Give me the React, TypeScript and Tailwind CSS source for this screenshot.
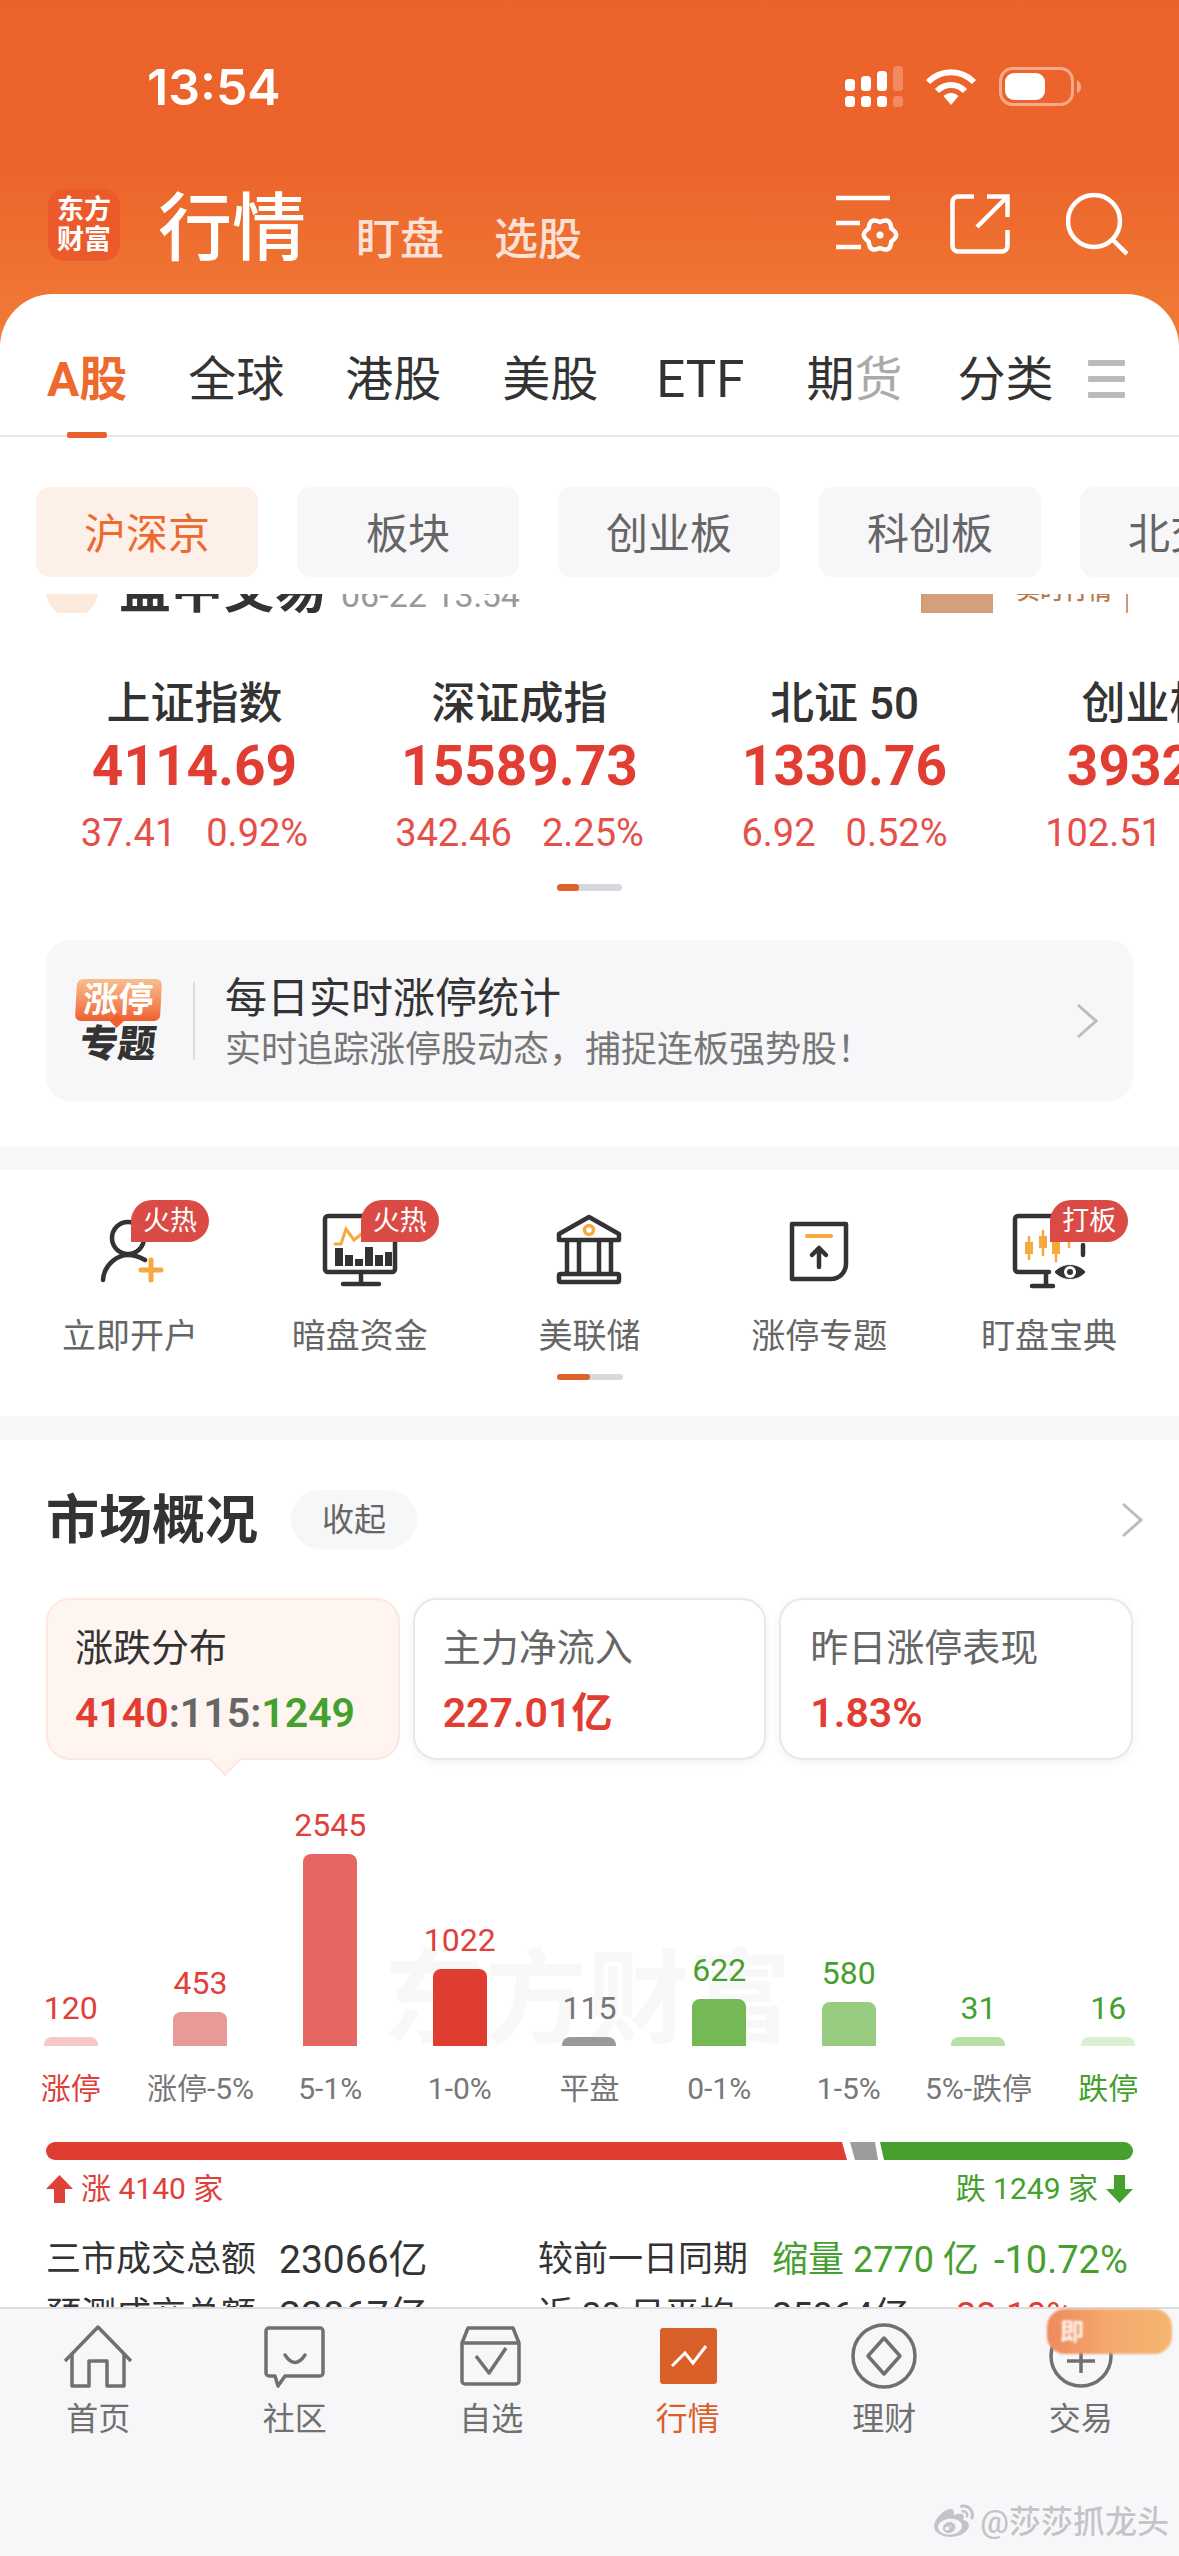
import { FaWeibo } from 'react-icons/fa';

const tabs = ['全球', '港股', '美股'];
const subTabs = ['板块', '创业板', '科创板', '北交所'];

const indices = [
  { name: '上证指数', value: '4114.69', change: '37.41', pct: '0.92%' },
  { name: '深证成指', value: '15589.73', change: '342.46', pct: '2.25%' },
  { name: '北证 50', value: '1330.76', change: '6.92', pct: '0.52%' },
  { name: '创业板指', value: '3932.16', change: '102.51', pct: '2.68%' },
];

const bars = [
  { value: '120', label: '涨停', h: 'h-[9px]', bar: 'bg-[#F6C8C6]', text: 'text-[#E0403A]', labelText: 'text-[#E0403A]' },
  { value: '453', label: '涨停-5%', h: 'h-[34px]', bar: 'bg-[#EA9A96]', text: 'text-[#E0403A]', labelText: 'text-[#777777]' },
  { value: '2545', label: '5-1%', h: 'h-[192px]', bar: 'bg-[#E66661]', text: 'text-[#E0403A]', labelText: 'text-[#777777]' },
  { value: '1022', label: '1-0%', h: 'h-[77px]', bar: 'bg-[#DF3D32]', text: 'text-[#E0403A]', labelText: 'text-[#777777]' },
  { value: '115', label: '平盘', h: 'h-[9px]', bar: 'bg-[#999999]', text: 'text-[#777777]', labelText: 'text-[#777777]' },
  { value: '622', label: '0-1%', h: 'h-[47px]', bar: 'bg-[#75B957]', text: 'text-[#45A02E]', labelText: 'text-[#777777]' },
  { value: '580', label: '1-5%', h: 'h-[44px]', bar: 'bg-[#98CC80]', text: 'text-[#45A02E]', labelText: 'text-[#777777]' },
  { value: '31', label: '5%-跌停', h: 'h-[9px]', bar: 'bg-[#B9DFA9]', text: 'text-[#45A02E]', labelText: 'text-[#777777]' },
  { value: '16', label: '跌停', h: 'h-[9px]', bar: 'bg-[#D9EFD0]', text: 'text-[#45A02E]', labelText: 'text-[#45A02E]' },
];

function SignalIcon() {
  return (
    <svg width="58" height="42" viewBox="0 0 58 42" fill="#fff">
      <rect x="0" y="30" width="10" height="11" rx="3.5" />
      <rect x="16" y="30" width="10" height="11" rx="3.5" />
      <rect x="32" y="30" width="10" height="11" rx="3.5" />
      <rect x="48" y="30" width="10" height="11" rx="3.5" opacity="0.25" />
      <rect x="0" y="13" width="10" height="12" rx="3.5" />
      <rect x="16" y="10" width="10" height="15" rx="3.5" />
      <rect x="32" y="5" width="10" height="20" rx="3.5" />
      <rect x="48" y="0" width="10" height="25" rx="3.5" opacity="0.25" />
    </svg>
  );
}

function WifiIcon() {
  return (
    <svg width="52" height="38" viewBox="0 0 52 38" fill="none" stroke="#fff" strokeWidth="6">
      <path d="M3 14 C16 1 36 1 49 14" />
      <path d="M12 23 C20 15 32 15 40 23" />
      <path d="M18.5 28 C23 24 29 24 33.5 28 L26 37 Z" fill="#fff" stroke="none" />
    </svg>
  );
}

function BatteryIcon() {
  return (
    <svg width="84" height="40" viewBox="0 0 84 40">
      <rect x="1.5" y="1.5" width="72" height="36" rx="12" fill="none" stroke="#fff" strokeOpacity="0.45" strokeWidth="3" />
      <rect x="6" y="6" width="40" height="27" rx="9" fill="#fff" />
      <path d="M78 13 C81 15 82 17 82 20 C82 23 81 25 78 26 Z" fill="#fff" fillOpacity="0.45" />
    </svg>
  );
}

function GearMenuIcon() {
  return (
    <svg width="64" height="60" viewBox="0 0 64 60" fill="none" stroke="#fff" strokeWidth="4.5">
      <path d="M0 4 H54 M0 29 H24 M0 53 H25" />
      <path d="M55.3 34.5 Q65 41 55.3 47.5 Q54.5 59.2 44 54 Q33.5 59.2 32.7 47.5 Q23 41 32.7 34.5 Q33.5 22.8 44 28 Q54.5 22.8 55.3 34.5 Z" strokeLinejoin="round" />
      <circle cx="44" cy="41" r="3.5" fill="#fff" stroke="none" />
    </svg>
  );
}

function ShareIcon() {
  return (
    <svg width="60" height="60" viewBox="0 0 60 60" fill="none" stroke="#fff" strokeWidth="4.5">
      <path d="M24 2.5 H8 a5.5 5.5 0 0 0 -5.5 5.5 V52 a5.5 5.5 0 0 0 5.5 5.5 H52 a5.5 5.5 0 0 0 5.5 -5.5 V36" />
      <path d="M37 2.5 H57.5 V23" />
      <path d="M57.5 2.5 L27 33" />
    </svg>
  );
}

function SearchIcon() {
  return (
    <svg width="62" height="64" viewBox="0 0 62 64" fill="none" stroke="#fff" strokeWidth="4.5">
      <circle cx="28" cy="29" r="26" />
      <path d="M47 48 L61 62" />
    </svg>
  );
}

function Chevron() {
  return (
    <svg width="22" height="36" viewBox="0 0 22 36" fill="none" stroke="#BDBDBD" strokeWidth="3">
      <path d="M2 2 L20 18 L2 34" />
    </svg>
  );
}

function OpenAccountIcon() {
  return (
    <svg width="100" height="100" viewBox="0 0 100 100" fill="none" stroke="#333" strokeWidth="4.5" strokeLinecap="round">
      <circle cx="48" cy="37" r="16" />
      <path d="M23 79 C24 63 38 54 48 54 C55 54 60 56 65 59" />
      <path d="M71 59 V79 M61 69 H81" stroke="#F5A93F" strokeWidth="5" />
    </svg>
  );
}

function DarkPoolIcon() {
  return (
    <svg width="100" height="100" viewBox="0 0 100 100" fill="none" stroke="#333" strokeWidth="4.5" strokeLinecap="round">
      <defs>
        <pattern id="stripes" width="4" height="4" patternUnits="userSpaceOnUse">
          <rect width="4" height="2.6" fill="#F5B04C" />
        </pattern>
      </defs>
      <rect x="15" y="15" width="70" height="56" rx="3" />
      <path d="M51 71 V83 M33 83 H69" />
      <path d="M25 43 H31 L36 28 L44 39 L54 31" stroke="#F5A93F" strokeWidth="3" />
      <g fill="url(#stripes)" stroke="none">
        <rect x="25" y="47" width="8" height="18" />
        <rect x="35" y="54" width="8" height="11" />
        <rect x="45" y="58" width="8" height="7" />
        <rect x="55" y="46" width="8" height="19" />
        <rect x="65" y="54" width="8" height="11" />
        <rect x="75" y="51" width="7" height="14" />
      </g>
    </svg>
  );
}

function FedIcon() {
  return (
    <svg width="100" height="100" viewBox="0 0 100 100" fill="none" stroke="#333" strokeWidth="4.5" strokeLinejoin="round">
      <path d="M20 39 V33 L50 16 L80 33 V39 Z" />
      <circle cx="50" cy="29" r="4.5" stroke="#F5A93F" strokeWidth="3.5" />
      <path d="M28 39 V73 M40 39 V73 M60 39 V73 M72 39 V73" />
      <rect x="20" y="73" width="60" height="8" rx="1.5" />
    </svg>
  );
}

function LimitUpIcon() {
  return (
    <svg width="100" height="100" viewBox="0 0 100 100" fill="none" stroke="#333" strokeWidth="4.5" strokeLinecap="round" strokeLinejoin="round">
      <path d="M23 23 H77 V63 a15 15 0 0 1 -15 15 H23 Z" />
      <path d="M38 35 H62" stroke="#F5A93F" strokeWidth="4" />
      <path d="M50 66 V47 M43 54 L50 47 L57 54" />
    </svg>
  );
}

function WatchBookIcon() {
  return (
    <svg width="100" height="100" viewBox="0 0 100 100" fill="none" stroke="#333" strokeWidth="4.5" strokeLinecap="round">
      <path d="M52 15 H19 a3 3 0 0 0 -3 3 V68 a3 3 0 0 0 3 3 H50 M47 71 V85 M33 85 H54 M84 44 V54" />
      <g stroke="#F5A93F" strokeWidth="2.5">
        <path d="M30 36 V58 M44 30 V54 M57 36 V60 M70 34 V46" />
      </g>
      <g fill="#F5A93F" stroke="none">
        <rect x="26" y="41" width="8" height="12" />
        <rect x="40" y="35" width="8" height="12" />
        <rect x="53" y="41" width="8" height="12" />
      </g>
      <path d="M55 71 C63 61 79 61 87 71 C79 81 63 81 55 71 Z" fill="#333" stroke="#fff" strokeWidth="1" />
      <circle cx="71" cy="71" r="6" fill="#fff" stroke="none" />
      <circle cx="71" cy="71" r="3" fill="#333" stroke="none" />
    </svg>
  );
}

function HomeIcon() {
  return (
    <svg width="80" height="66" viewBox="0 0 80 66" fill="none" stroke="#707070" strokeWidth="3.5" strokeLinejoin="round">
      <path d="M7 38 L40 4 L73 38" />
      <path d="M14 30 V63 H31 V38 H49 V63 H66 V30" />
    </svg>
  );
}

function CommunityIcon() {
  return (
    <svg width="80" height="66" viewBox="0 0 80 66" fill="none" stroke="#707070" strokeWidth="3.5" strokeLinejoin="round">
      <path d="M14 5 H65 a3 3 0 0 1 3 3 V50 a3 3 0 0 1 -3 3 H30 L23 63 L20 53 H14 a3 3 0 0 1 -3 -3 V8 a3 3 0 0 1 3 -3 Z" />
      <path d="M30 32 Q40 47 50 32" strokeLinecap="round" />
    </svg>
  );
}

function WatchlistIcon() {
  return (
    <svg width="80" height="66" viewBox="0 0 80 66" fill="none" stroke="#707070" strokeWidth="3.5" strokeLinejoin="round">
      <path d="M11 20 L17 5 H62 L68 20 V58 a3 3 0 0 1 -3 3 H14 a3 3 0 0 1 -3 -3 Z" />
      <path d="M11 20 H68" />
      <path d="M25 33 L38 50 L55 25" />
    </svg>
  );
}

function MarketIcon() {
  return (
    <svg width="80" height="66" viewBox="0 0 80 66" fill="none">
      <rect x="12" y="5" width="57" height="56" rx="3" fill="#D96029" />
      <path d="M24 43 L37 30 L45 40 L58 23" stroke="#fff" strokeWidth="3" />
    </svg>
  );
}

function WealthIcon() {
  return (
    <svg width="80" height="66" viewBox="0 0 80 66" fill="none" stroke="#707070" strokeWidth="3.5" strokeLinejoin="round">
      <ellipse cx="40" cy="33" rx="31" ry="31" />
      <path d="M40 15 L56 33 L40 51 L24 33 Z" />
    </svg>
  );
}

function TradeIcon() {
  return (
    <svg width="80" height="66" viewBox="0 0 80 66" fill="none" stroke="#707070" strokeWidth="3.5">
      <circle cx="40" cy="33" r="30" />
      <path d="M40 22 V50 M26 38 H54" />
    </svg>
  );
}

const shortcuts = [
  { label: '立即开户', icon: <OpenAccountIcon />, tag: '火热' },
  { label: '暗盘资金', icon: <DarkPoolIcon />, tag: '火热' },
  { label: '美联储', icon: <FedIcon /> },
  { label: '涨停专题', icon: <LimitUpIcon /> },
  { label: '盯盘宝典', icon: <WatchBookIcon />, tag: '打板' },
];

const navItems = [
  { label: '首页', icon: <HomeIcon /> },
  { label: '社区', icon: <CommunityIcon /> },
  { label: '自选', icon: <WatchlistIcon /> },
  { label: '行情', icon: <MarketIcon />, active: true },
  { label: '理财', icon: <WealthIcon /> },
  { label: '交易', icon: <TradeIcon /> },
];

export default function App() {
  return (
    <div className="flex h-[2556px] w-[1179px] flex-col overflow-hidden bg-white font-['Roboto','Noto_Sans_CJK_SC',sans-serif] text-[#333333]">
      <div className="min-h-0 flex-1 overflow-hidden">
        {/* orange header */}
        <div className="h-[346px] bg-gradient-to-b from-[#EB622A] via-[#EC652B] to-[#F17C37]">
          <div className="flex h-[174px] items-center justify-between pr-[96px] pl-[147px]">
            <span className="font-['Inter',sans-serif] text-[50px] font-semibold text-white">13:54</span>
            <div className="flex items-center gap-[22px]">
              <SignalIcon />
              <WifiIcon />
              <BatteryIcon />
            </div>
          </div>
          <div className="mt-[14px] flex h-[73px] items-end pl-[48px]">
            <div className="flex h-[72px] w-[72px] flex-col items-center justify-center rounded-[16px] bg-[#EC5A2B] text-[27px] leading-[30px] font-bold text-white">
              <span>东方</span>
              <span>财富</span>
            </div>
            <span className="mb-[-8px] ml-[38px] text-[74px] leading-[80px] font-medium text-white">行情</span>
            <span className="mb-[-6px] ml-[50px] text-[44px] leading-[54px] font-medium text-white/80">盯盘</span>
            <span className="mb-[-6px] ml-[50px] text-[44px] leading-[54px] font-medium text-white/80">选股</span>
            <div className="mb-[5px] ml-auto flex items-center pr-[51px]">
              <GearMenuIcon />
              <span className="ml-[50px]">
                <ShareIcon />
              </span>
              <span className="ml-[56px]">
                <SearchIcon />
              </span>
            </div>
          </div>
        </div>

        <div className="-mt-[52px] rounded-t-[53px] bg-white">
          {/* market tabs */}
          <div className="flex h-[143px] items-start gap-[61px] border-b-2 border-[#E8E8E8] pt-[58px] pl-[47px]">
            <div className="flex flex-col items-center">
              <span className="text-[48px] leading-[56px] font-bold text-[#EC6A2E]">A股</span>
              <span className="mt-[24px] h-[6px] w-[40px] rounded-[2px] bg-[#E8602A]" />
            </div>
            {tabs.map((t) => (
              <span key={t} className="text-[48px] leading-[56px] text-[#333333]">
                {t}
              </span>
            ))}
            <span className="-ml-[3px] text-[51px] leading-[56px] text-[#333333]">ETF</span>
            <span className="ml-[1px] text-[48px] leading-[56px] text-[#333333]">
              期<span className="text-[#AAAAAA]">货</span>
            </span>
            <span className="-ml-[6px] text-[48px] leading-[56px] text-[#333333]">分类</span>
            <div className="-ml-[26px] flex flex-col gap-[10px] pt-[8px]">
              <span className="h-[6px] w-[37px] rounded-[1px] bg-[#BBBBBB]" />
              <span className="h-[6px] w-[37px] rounded-[1px] bg-[#BBBBBB]" />
              <span className="h-[6px] w-[37px] rounded-[1px] bg-[#BBBBBB]" />
            </div>
          </div>

          {/* sub tabs */}
          <div className="flex gap-[39px] overflow-hidden pt-[50px] pb-[17px] pl-[36px]">
            <span className="flex h-[90px] w-[222px] shrink-0 items-center justify-center rounded-[14px] bg-[#FDF0E9] pt-[4px] text-[42px] text-[#EC6A2E]">
              沪深京
            </span>
            {subTabs.map((t) => (
              <span
                key={t}
                className="flex h-[90px] w-[222px] shrink-0 items-center justify-center rounded-[14px] bg-[#F7F7F9] pt-[4px] text-[42px] text-[#666666]"
              >
                {t}
              </span>
            ))}
          </div>

          {/* scrolled title, cut by the sub tabs */}
          <div className="h-[19px] overflow-hidden">
            <div className="-mt-[33px] flex h-[60px] items-center pr-[51px] pl-[46px]">
              <span className="h-[52px] w-[52px] rounded-full bg-[#FCEBDD]" />
              <span className="ml-[21px] text-[52px] leading-[60px] font-bold text-[#333333]">盘中交易</span>
              <span className="mt-[8px] ml-[14px] text-[34px] text-[#999999]">06-22 13:54</span>
              <div className="ml-auto flex h-[52px] w-[207px] items-center justify-end rounded-[6px] border-2 border-[#CF9A72] bg-white text-[24px] font-medium text-[#B8794C]">
                <span className="mr-auto h-full w-[70px] bg-[#D3A07B]" />
                <span className="pr-[14px]">实时行情</span>
              </div>
            </div>
          </div>

          {/* index quotes */}
          <div className="flex overflow-hidden pt-[66px] pl-[32px]">
            {indices.map((i) => (
              <div key={i.name} className="flex w-[325px] shrink-0 flex-col items-center">
                <span className="text-[44px] leading-[50px] font-medium whitespace-nowrap text-[#333333]">{i.name}</span>
                <span className="mt-[5px] text-[55px] leading-[64px] font-bold text-[#E23D33]">{i.value}</span>
                <div className="mt-[15px] flex gap-[30px] text-[38px] leading-[40px] whitespace-nowrap text-[#E5504A]">
                  <span>{i.change}</span>
                  <span>{i.pct}</span>
                </div>
              </div>
            ))}
          </div>
          <div className="mt-[31px] flex justify-center">
            <div className="h-[7px] w-[65px] rounded-full bg-[#D5D8DC]">
              <div className="h-[7px] w-[22px] rounded-full bg-[#DD6229]" />
            </div>
          </div>

          {/* limit-up banner */}
          <div className="mx-[46px] mt-[49px] flex h-[161px] items-center rounded-[24px] bg-[#F7F7F9] pr-[35px] pl-[30px]">
            <div className="flex w-[85px] flex-col items-center">
              <div className="relative flex h-[42px] w-[85px] -skew-x-3 items-center justify-center rounded-[6px] bg-gradient-to-b from-[#F8BE8F] to-[#EE6030] text-[35px] leading-none font-bold text-white">
                涨停
                <span className="absolute -bottom-[5px] left-[37px] h-[10px] w-[10px] rotate-45 bg-[#EE6030]" />
              </div>
              <span className="mt-[5px] -skew-x-6 text-[38px] leading-[36px] font-black whitespace-nowrap text-[#333333]">专题</span>
            </div>
            <span className="ml-[32px] h-[78px] w-[2px] bg-[#DDDDDD]" />
            <div className="ml-[30px] flex flex-col pt-[6px]">
              <span className="text-[42px] leading-[50px] text-[#333333]">每日实时涨停统计</span>
              <span className="mt-[3px] text-[36px] leading-[46px] text-[#777777]">实时追踪涨停股动态，捕捉连板强势股！</span>
            </div>
            <div className="ml-auto">
              <Chevron />
            </div>
          </div>

          <div className="mt-[46px] h-[23px] bg-[#F6F7F9]" />

          {/* shortcuts */}
          <div className="grid h-[246px] grid-cols-5 px-[15px] pt-[31px]">
            {shortcuts.map((s) => (
              <div key={s.label} className="relative flex flex-col items-center">
                {s.icon}
                {s.tag && (
                  <span className="absolute top-[-1px] left-[116px] flex h-[42px] w-[78px] items-center justify-center rounded-t-[21px] rounded-br-[21px] bg-[#DB4B45] text-[27px] text-white">
                    {s.tag}
                  </span>
                )}
                <span className="mt-[15px] text-[34px] leading-[40px] text-[#666666]">{s.label}</span>
              </div>
            ))}
          </div>
          <div className="-mt-[42px] flex justify-center">
            <div className="h-[6px] w-[66px] rounded-full bg-[#D5D8DC]">
              <div className="h-[6px] w-[33px] rounded-full bg-[#DD6229]" />
            </div>
          </div>

          <div className="mt-[36px] h-[24px] bg-[#F6F7F9]" />

          {/* market overview */}
          <div className="flex items-center pt-[48px] pr-[36px] pl-[46px]">
            <span className="pt-[3px] text-[53px] leading-[60px] font-bold text-[#333333]">市场概况</span>
            <span className="ml-[33px] flex h-[59px] w-[126px] items-center justify-center rounded-full bg-[#F6F7F9] text-[32px] text-[#666666]">
              收起
            </span>
            <div className="ml-auto">
              <Chevron />
            </div>
          </div>

          <div className="mx-[46px] mt-[47px] grid grid-cols-3 gap-[13px]">
            <div className="relative h-[162px] rounded-[24px] border-2 border-[#FDE8DE] bg-[#FEF5F1] pt-[23px] pl-[27px]">
              <div className="text-[38px] leading-[50px] text-[#333333]">涨跌分布</div>
              <div className="mt-[15px] text-[41px] leading-[50px] font-semibold">
                <span className="text-[#E23D33]">4140</span>
                <span className="text-[#666666]">:115:</span>
                <span className="text-[#45A02E]">1249</span>
              </div>
              <span className="absolute -bottom-[13px] left-[165px] h-[24px] w-[24px] rotate-45 border-r-2 border-b-2 border-[#FDE8DE] bg-[#FEF5F1]" />
            </div>
            <div className="h-[162px] rounded-[24px] border-2 border-[#E8E8E8] bg-white pt-[23px] pl-[28px] shadow-[0_2px_10px_rgba(0,0,0,0.06)]">
              <div className="text-[38px] leading-[50px] text-[#666666]">主力净流入</div>
              <div className="mt-[15px] text-[41px] leading-[50px] font-semibold text-[#E23D33]">227.01亿</div>
            </div>
            <div className="h-[162px] rounded-[24px] border-2 border-[#E8E8E8] bg-white pt-[23px] pl-[29px] shadow-[0_2px_10px_rgba(0,0,0,0.06)]">
              <div className="text-[38px] leading-[50px] text-[#666666]">昨日涨停表现</div>
              <div className="mt-[15px] text-[41px] leading-[50px] font-semibold text-[#E23D33]">1.83%</div>
            </div>
          </div>

          {/* distribution bars */}
          <div className="relative mt-[40px] h-[332px] px-[6px]">
            <span className="absolute top-[140px] left-[383px] text-[102px] leading-[120px] font-bold whitespace-nowrap text-[#F8F8F8]">
              东方财富
            </span>
            <div className="relative grid h-[246px] grid-cols-9">
              {bars.map((b) => (
                <div key={b.label} className="flex flex-col items-center justify-end">
                  <span className={`mb-[12px] text-[32px] leading-[34px] ${b.text}`}>{b.value}</span>
                  <div className={`w-[54px] rounded-t-[8px] ${b.h} ${b.bar}`} />
                </div>
              ))}
            </div>
            <div className="relative mt-[24px] grid grid-cols-9">
              {bars.map((b) => (
                <span key={b.label} className={`text-center text-[30px] leading-[38px] whitespace-nowrap ${b.labelText}`}>
                  {b.label}
                </span>
              ))}
            </div>
          </div>

          {/* up / down ratio */}
          <div className="mx-[46px] mt-[10px] h-[18px] overflow-hidden rounded-full">
            <svg width="1087" height="18" viewBox="0 0 1087 18" className="block">
              <polygon points="0,0 796,0 801,18 0,18" fill="#DF3D32" />
              <polygon points="804,0 829,0 832,18 809,18" fill="#9C9C9C" />
              <polygon points="834,0 1087,0 1087,18 838,18" fill="#479F2C" />
            </svg>
          </div>
          <div className="mx-[46px] mt-[13px] flex items-center justify-between text-[30px] leading-[32px]">
            <div className="flex items-center gap-[8px] text-[#E0403A]">
              <svg width="27" height="28" viewBox="0 0 27 28" fill="#E0403A">
                <path d="M13.5 0 L27 14 H19 V28 H8 V14 H0 Z" />
              </svg>
              <span>涨 4140 家</span>
            </div>
            <div className="flex items-center gap-[8px] text-[#45A02E]">
              <span>跌 1249 家</span>
              <svg width="27" height="28" viewBox="0 0 27 28" fill="#45A02E">
                <path d="M13.5 28 L27 14 H19 V0 H8 V14 H0 Z" />
              </svg>
            </div>
          </div>

          <div className="mt-[27px] flex h-[56px] items-center pl-[46px] text-[36px] leading-[56px] whitespace-nowrap">
            <span className="w-[233px] text-[35px] text-[#333333]">三市成交总额</span>
            <span className="w-[259px] text-[39px] text-[#333333]">23066亿</span>
            <span className="w-[234px] text-[35px] text-[#333333]">较前一日同期</span>
            <span className="w-[222px] text-[#45A02E]">缩量 2770 亿</span>
            <span className="text-[38px] text-[#45A02E]">-10.72%</span>
          </div>
          <div className="flex h-[56px] items-center pl-[46px] text-[36px] leading-[56px] whitespace-nowrap">
            <span className="w-[233px] text-[35px] text-[#333333]">预测成交总额</span>
            <span className="w-[259px] text-[39px] text-[#333333]">23067亿</span>
            <span className="w-[234px] text-[35px] text-[#333333]">近 20 日平均</span>
            <span className="w-[174px] text-[#333333]">25864亿</span>
            <span className="text-[#E23D33]">-22.10%</span>
          </div>
        </div>
      </div>

      {/* bottom nav */}
      <div className="relative h-[249px] shrink-0 border-t-2 border-[#DDDDDD] bg-[#F7F7F9] pt-[14px]">
        <div className="grid grid-cols-6">
          {navItems.map((n) => (
            <div key={n.label} className="flex flex-col items-center">
              {n.icon}
              <span className={`mt-[10px] text-[32px] leading-[40px] ${n.active ? 'text-[#D96029]' : 'text-[#707070]'}`}>
                {n.label}
              </span>
            </div>
          ))}
        </div>
        <div className="absolute top-0 left-[1047px] flex h-[45px] w-[125px] items-center rounded-[18px] bg-gradient-to-r from-[#EE8A5E] via-[#F4A96C] to-[#F5B572] pl-[13px] text-[24px] font-bold text-white/90 blur-[1px]">
          即
        </div>
        <div className="absolute right-[10px] bottom-[10px] flex items-center gap-[6px] text-[32px] font-medium text-[#C4C4C8] [text-shadow:0_0_2px_#fff]">
          <FaWeibo size={40} />
          <span>@莎莎抓龙头</span>
        </div>
      </div>
    </div>
  );
}
